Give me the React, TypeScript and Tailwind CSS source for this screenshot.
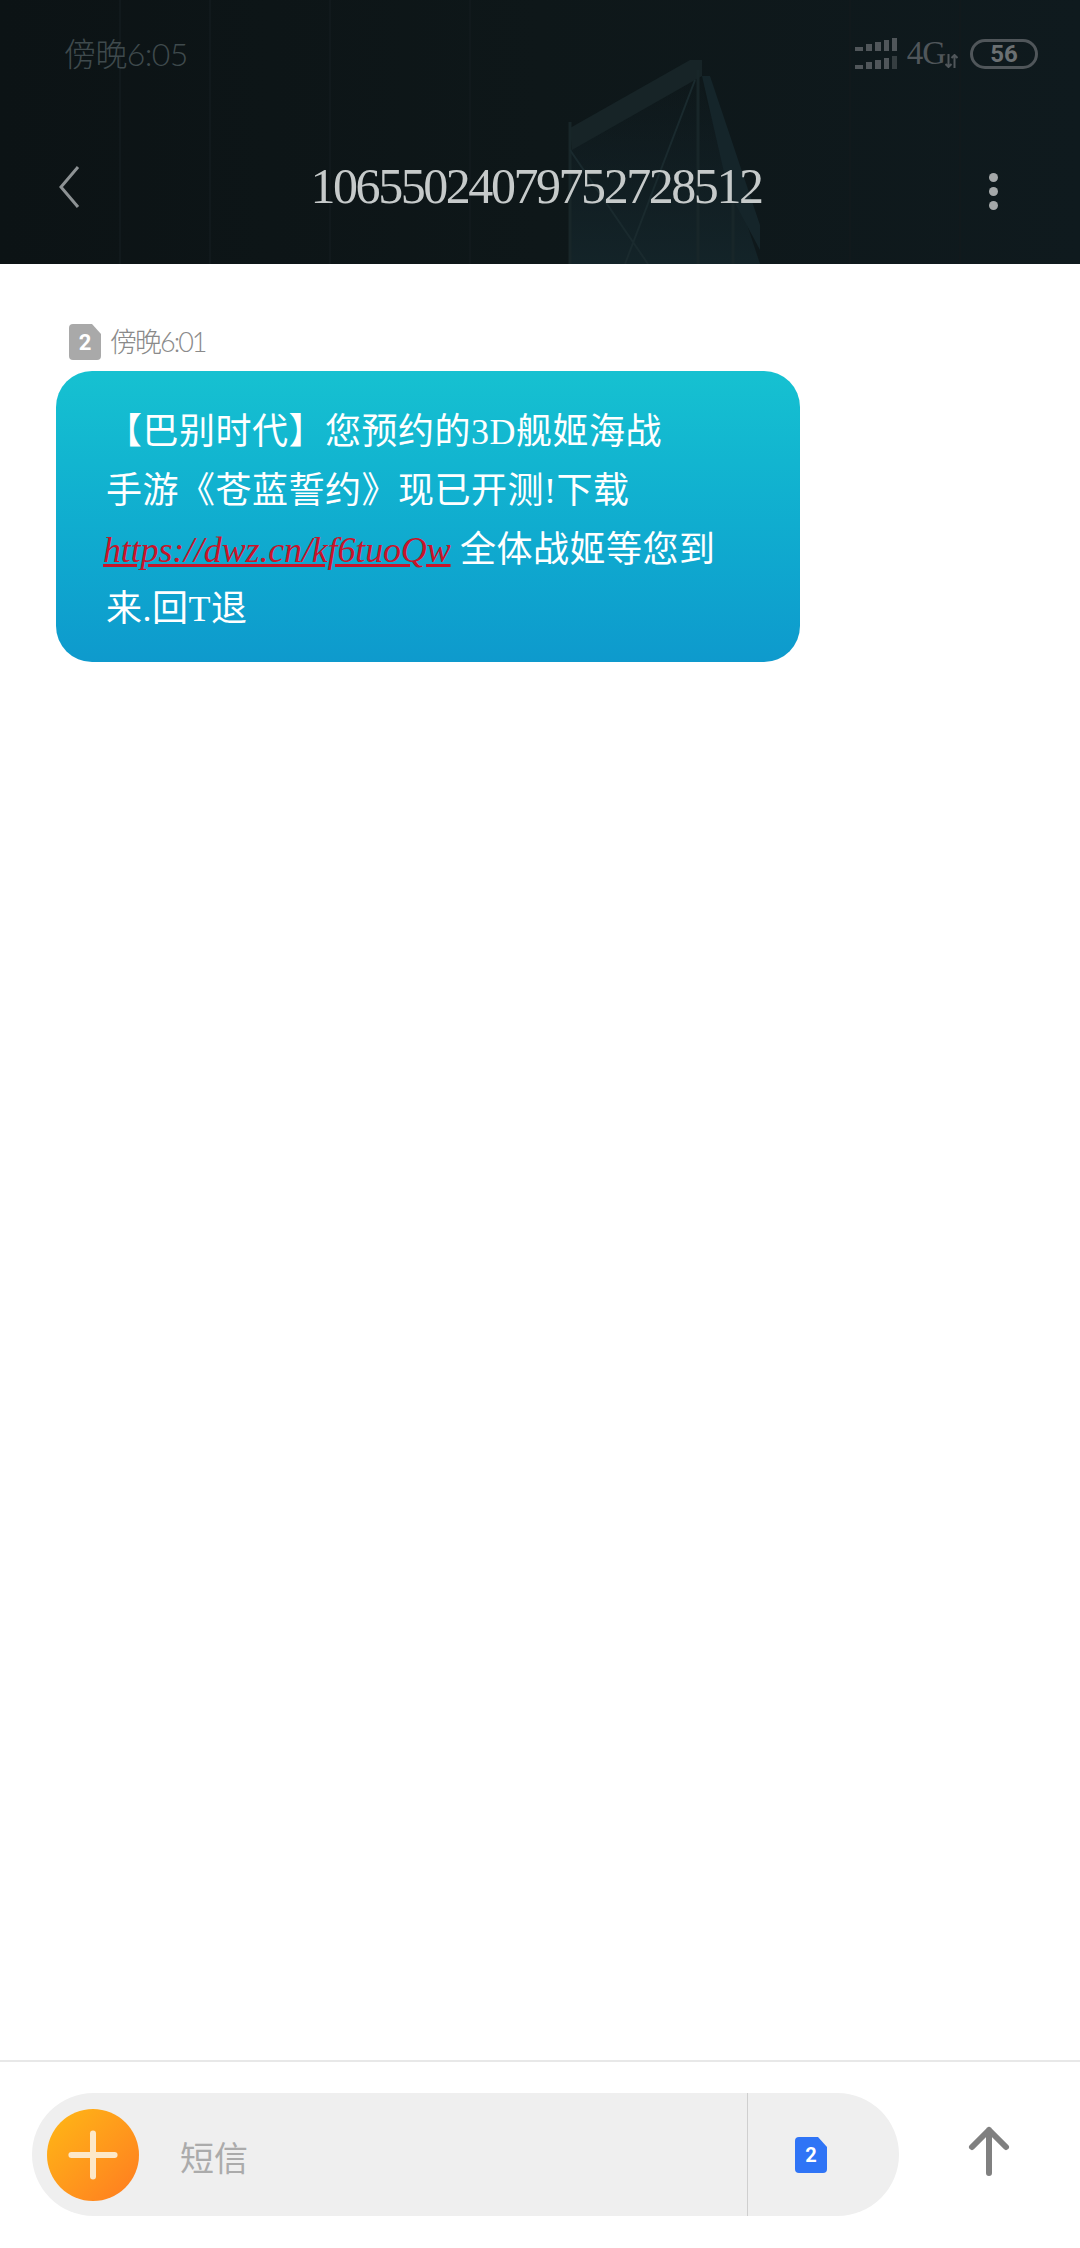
import { Plus } from "lucide-react"

const serif = "font-['Liberation_Serif','Noto_Sans_CJK_SC',serif]"
const thin = "font-['Lato','Noto_Sans_CJK_SC',sans-serif] font-light"

function Backdrop() {
  return (
    <svg className="absolute inset-0 h-full w-full" viewBox="0 0 1080 264" preserveAspectRatio="none">
      <defs>
        <linearGradient id="tower" x1="0" y1="0" x2="0" y2="1">
          <stop offset="0" stopColor="#14232a" stopOpacity="0" />
          <stop offset="1" stopColor="#14252a" stopOpacity="0.9" />
        </linearGradient>
        <linearGradient id="tint" x1="0" y1="0" x2="1" y2="0">
          <stop offset="0" stopColor="#0c1315" />
          <stop offset="0.5" stopColor="#0e1719" />
          <stop offset="1" stopColor="#0f1a1e" />
        </linearGradient>
      </defs>
      <rect width="1080" height="264" fill="url(#tint)" />
      <path d="M120 0V264M210 0V264M330 0V264M470 0V264M850 0V264M960 0V264" stroke="#11191c" strokeWidth="2" />
      <polygon points="570,150 698,76 760,264 570,264" fill="url(#tower)" />
      <polygon points="570,128 690,60 702,60 702,76 572,150" fill="#172427" />
      <path d="M570 122V264M698 70V264M733 200V264" stroke="#182629" strokeWidth="3" fill="none" />
      <path d="M695 80 625 264M570 150 648 264" stroke="#1a2a2e" strokeWidth="2" fill="none" />
      <polygon points="702,76 710,76 760,225 760,250 728,190" fill="#15252a" />
    </svg>
  )
}

function SignalBars() {
  return (
    <svg width="42" height="32" viewBox="0 0 42 32" fill="#50565a">
      <rect x="0" y="9" width="8" height="4" />
      <rect x="11" y="6" width="6" height="7" />
      <rect x="20" y="4" width="6" height="9" />
      <rect x="29" y="2" width="5" height="11" />
      <rect x="37" y="0" width="5" height="13" />
      <rect x="0" y="27" width="8" height="4" />
      <rect x="11" y="24" width="6" height="7" />
      <rect x="20" y="22" width="6" height="9" />
      <rect x="29" y="20" width="5" height="11" />
      <rect x="37" y="18" width="5" height="13" opacity="0.6" />
    </svg>
  )
}

function SimBadge({ className, textClass }: { className: string; textClass: string }) {
  return (
    <div className={`relative flex items-center justify-center ${className}`}>
      <svg className="absolute inset-0 h-full w-full" viewBox="0 0 32 36">
        <path d="M4 0H23L32 10V32A4 4 0 0 1 28 36H4A4 4 0 0 1 0 32V4A4 4 0 0 1 4 0Z" fill="currentColor" />
      </svg>
      <span className={`relative font-['Roboto',sans-serif] font-bold text-white ${textClass}`}>2</span>
    </div>
  )
}

function App() {
  return (
    <div className={`flex h-[2248px] w-[1080px] flex-col bg-white ${serif}`}>
      <header className="relative h-[264px] shrink-0 overflow-hidden bg-[#0e1518]">
        <Backdrop />
        <div className="relative flex h-[108px] items-center justify-between pl-[64px] pr-[42px]">
          <span className={`text-[32px] tracking-[-0.6px] text-[#3f4a4d] ${thin}`}>傍晚6:05</span>
          <div className="flex items-center">
            <SignalBars />
            <span className="ml-[10px] text-[33px] tracking-[-1px] text-[#50565a]">4G</span>
            <svg className="mt-[14px]" width="13" height="14" viewBox="0 0 13 14" fill="none" stroke="#50565a" strokeWidth="2">
              <path d="M3.5 0V13M0.5 10 3.5 13 6.5 10M9.5 14V1M6.5 4 9.5 1 12.5 4" />
            </svg>
            <div className="ml-[12px] flex h-[30px] w-[68px] items-center justify-center rounded-full border-[3px] border-[#50565a] font-['Roboto',sans-serif] text-[24px] font-bold text-[#6b7072]">
              56
            </div>
          </div>
        </div>
        <div className="relative flex h-[156px] items-start justify-between pl-[58px] pr-[82px] pt-[57px]">
          <svg width="22" height="44" viewBox="0 0 22 44" fill="none" stroke="#8d9294" strokeWidth="3">
            <path d="M20 2 3 22 20 42" />
          </svg>
          <h1 className="ml-[3px] mt-[-16px] text-[50px] font-normal tracking-[-2.45px] text-[#c6caca]">10655024079752728512</h1>
          <div className="flex flex-col gap-[5px] pt-[8px]">
            <div className="size-[9px] rounded-full bg-[#a4a8a9]" />
            <div className="size-[9px] rounded-full bg-[#a4a8a9]" />
            <div className="size-[9px] rounded-full bg-[#a4a8a9]" />
          </div>
        </div>
      </header>

      <main className="flex-1 pl-[56px] pt-[60px]">
        <div className="flex h-[36px] items-center pl-[13px]">
          <SimBadge className="h-[36px] w-[32px] text-[#a9a9a9]" textClass="text-[22px]" />
          <span className={`ml-[9px] text-[27px] tracking-[-2px] text-[#8a8a8a] ${thin}`}>傍晚6:01</span>
        </div>
        <div className="mt-[11px] h-[291px] w-[744px] rounded-[36px] bg-gradient-to-b from-[#16c1d1] to-[#0e9acd] pl-[50px] pt-[32px] text-[36px] leading-[59px] tracking-[0.5px] text-white">
          <p>【巴别时代】您预约的3D舰姬海战</p>
          <p>手游《苍蓝誓约》现已开测!下载</p>
          <p className="-ml-[3px]">
            <a className="italic tracking-[-0.15px] text-[#c8142a] underline" href="#">
              https://dwz.cn/kf6tuoQw
            </a>{" "}
            全体战姬等您到
          </p>
          <p>来.回T退</p>
        </div>
      </main>

      <footer className="flex h-[188px] shrink-0 border-t-2 border-[#e8e8e8] pl-[32px] pt-[31px]">
        <div className="flex h-[123px] w-[867px] items-center rounded-[62px] bg-[#efefef]">
          <div className="ml-[15px] flex size-[92px] items-center justify-center rounded-full bg-gradient-to-br from-[#ffb814] to-[#ff7a20]">
            <Plus size={74} strokeWidth={1.95} color="#fde8c8" />
          </div>
          <span className="ml-[41px] mt-[10px] flex-1 text-[34px] text-[#ababab]">短信</span>
          <div className="flex h-full w-[152px] items-center border-l border-[#cfcfcf] pl-[47px] pt-[1px]">
            <SimBadge className="h-[36px] w-[32px] text-[#2f74f6]" textClass="text-[20px]" />
          </div>
        </div>
        <svg className="ml-[67px] mt-[31px]" width="46" height="52" viewBox="0 0 46 52" fill="none" stroke="#808080" strokeWidth="6" strokeLinecap="round" strokeLinejoin="round">
          <path d="M23 49V6M6 23 23 6 40 23" />
        </svg>
      </footer>
    </div>
  )
}

export default App
